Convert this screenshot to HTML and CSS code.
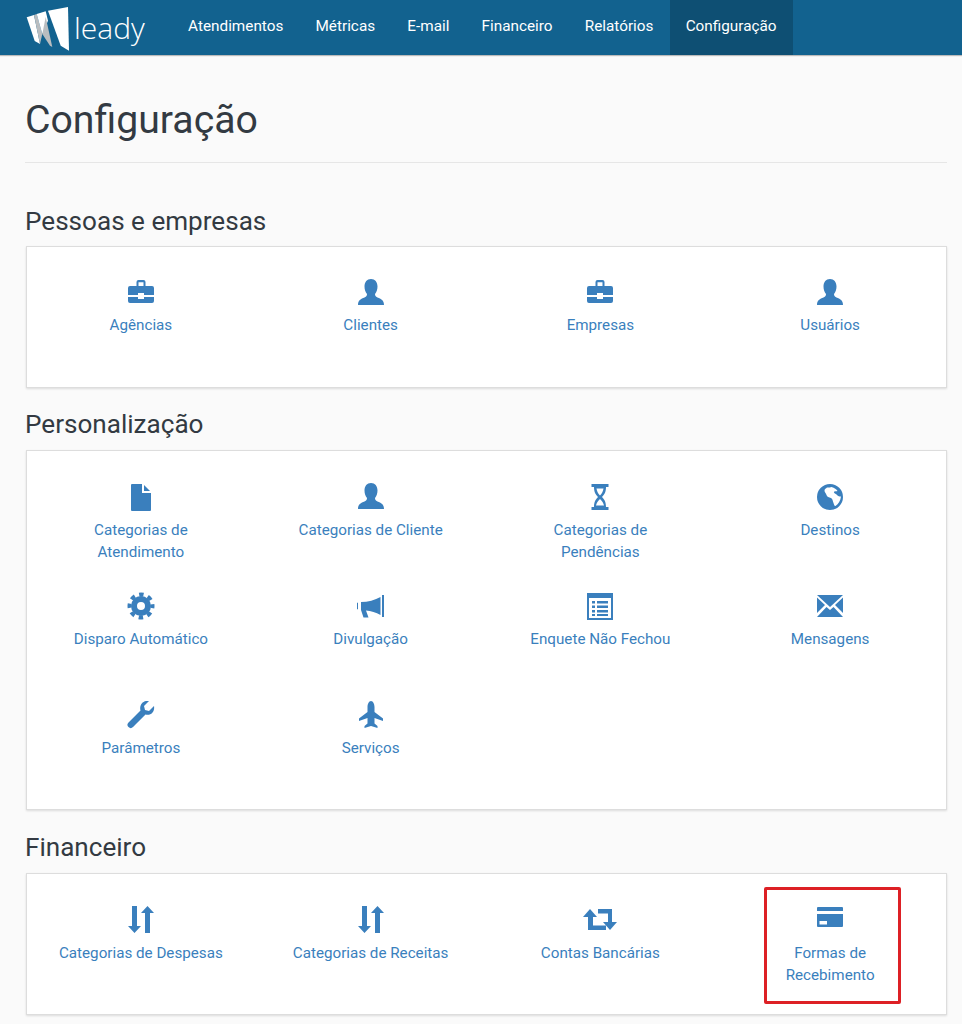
FILE: index.html
```html
<!DOCTYPE html>
<html lang="en">
<head>
    <meta charset="UTF-8">
    <title>Configuração</title>
    <link rel="stylesheet" href="styles.css">
</head>
<body>

    <svg class="sprite" xmlns="http://www.w3.org/2000/svg">
        <symbol id="i-briefcase" viewBox="0 1 28 28">
            <path d="M1 10a2 2 0 0 1 2-2h22a2 2 0 0 1 2 2v7H17v-2h-6v2H1z"/>
            <path d="M1 19h10v2h6v-2h10v4a2 2 0 0 1-2 2H3a2 2 0 0 1-2-2z"/>
            <path d="M9.500 8V4a2 2 0 0 1 2-2h5a2 2 0 0 1 2 2v4h-2V4.200h-5V8z"/>
        </symbol>
        <symbol id="i-user" viewBox="0 0 28 28">
            <path d="M14 0c4 0 6.500 3 6.500 7.500 0 3-1 5.500-2.500 7.500 0 1.500.5 2.500 2.500 3.500 3.500 1.500 6.500 2.500 6.500 7.500H1c0-5 3-6 6.500-7.500 2-1 2.500-2 2.500-3.500-1.500-2-2.500-4.500-2.500-7.500C7.500 3 10 0 14 0z"/>
        </symbol>
        <symbol id="i-file" viewBox="0 0 28 28">
            <path d="M5 1h10v9h9v17a1 1 0 0 1-1 1H5a1 1 0 0 1-1-1V2a1 1 0 0 1 1-1z"/>
            <path d="M17 2l6 6h-6z"/>
        </symbol>
        <symbol id="i-hourglass" viewBox="0 0 28 28">
            <path d="M5.500 1h17v3h-17zM5.500 24h17v3h-17z"/>
            <path d="M8 4h12c0 5-1.500 7.500-4 10 2.500 2.500 4 5 4 10H8c0-5 1.500-7.500 4-10-2.500-2.500-4-5-4-10zm2.500 1.500c.3 2.500 1.500 5 3.500 7 2-2 3.200-4.500 3.500-7zM10 22.500h8c-.5-2.500-2-4.500-4-6.500-2 2-3.500 4-4 6.500z" fill-rule="evenodd"/>
        </symbol>
        <symbol id="i-globe" viewBox="0 0 28 28">
            <path fill-rule="evenodd" d="M14 1a13 13 0 1 1 0 26 13 13 0 0 1 0-26zM11 4.500c-1 1-2.500 1.500-2.500 3 0 2 1.500 2.500 2 4.500.5 2 2.500 2 4.500 3 2 1 1.500 3 2.500 5 .5 1.500 1 3.500 2 3 3-2 5-5.500 5.500-9.500-1.500 0-3-.5-4-1.500-.8-1-2.500-1.500-3-2.500-.5-1.500 2-1 3.500-1.500-1-1.500-3-3.500-6-4-1 .5-2.500.5-4.500.5z"/>
        </symbol>
        <symbol id="i-gear" viewBox="0 0 28 28">
            <circle cx="14" cy="14" r="7" fill="none" stroke="currentColor" stroke-width="6"/>
            <circle cx="14" cy="14" r="11.500" fill="none" stroke="currentColor" stroke-width="4" stroke-dasharray="4.500 4.530" stroke-dashoffset="2.250"/>
        </symbol>
        <symbol id="i-bullhorn" viewBox="1 0 28 28">
            <path d="M26 3h2v22h-2zM24.500 5v18C20 20.500 15 19 10 18.500l2.500 7h-5L5 18V10c7 0 14-2 19.500-5zM0 11.500l2-1v7l-2-1z"/>
        </symbol>
        <symbol id="i-list" viewBox="0 0 28 28">
            <path fill-rule="evenodd" d="M1 1h26v27H1zm2 5v20h22V6z"/>
            <path d="M6 9h3v2.500H6zM11 9h11v2.500H11zM6 13.500h3V16H6zM11 13.500h11V16H11zM6 18h3v2.500H6zM11 18h11v2.500H11zM6 22h3v2H6zM11 22h11v2H11z"/>
        </symbol>
        <symbol id="i-envelope" viewBox="0 0 28 28">
            <path d="M1 3h26L14 15zM1 5.500V21l8-8zM27 5.500V21l-8-8zM1 25l9.500-10 3.500 3 3.500-3L27 25z"/>
        </symbol>
        <symbol id="i-wrench" viewBox="0 0 28 28">
            <path d="M27 5l-5 5-4-1-1-4 5-5c-6-1-10 4-8.500 9.500L1.500 21.500a2.800 2.800 0 0 0 4.500 4.500L18.500 13.500C24 15 28 10.500 27 5z"/>
        </symbol>
        <symbol id="i-plane" viewBox="0 0 28 28">
            <path d="M14 0c-2 0-3.500 3-3.500 6v5L2 17.500V20l8.500-3v5.500L7.500 25v2l6.500-2 6.500 2v-2l-3-2.500V17l8.500 3v-2.500L17.500 11V6c0-3-1.500-6-3.500-6z"/>
        </symbol>
        <symbol id="i-transfer" viewBox="0 0 28 28">
            <path d="M5 0h5v20h4l-6.500 7L1 20h4zM18 27h5V7h4L20.500 0 14 7h4z"/>
        </symbol>
        <symbol id="i-retweet" viewBox="0 0 34 28">
            <path d="M7 3l7 8h-4v8.500h13V24H5V11H0zM15 3h14v13h5l-7 8-7-8h5V7.500H15z"/>
        </symbol>
        <symbol id="i-card" viewBox="0 0 28 28">
            <path fill-rule="evenodd" d="M1 8h26v12a1 1 0 0 1-1 1H2a1 1 0 0 1-1-1zm2.500 7v3.500H11V15z"/>
            <path d="M2 1h24a1 1 0 0 1 1 1v3H1V2a1 1 0 0 1 1-1z"/>
        </symbol>
    </svg>

    <nav class="topbar">
        <a class="brand" href="#">
            <svg class="brand-mark" viewBox="0 0 44 44">
                <path fill="#fff" d="M.7 10.300L8 8l6 29-5.300-3z"/>
                <path fill="#b9bdc0" d="M8 8l2.700-1 5.600 20-2.300 10z"/>
                <path fill="#fff" d="M10.700 7l9-2.700 2.300 9.400-5.700 13.300z"/>
                <path fill="#b9bdc0" d="M19.700 10l6.600 30-2.300-1.300-7.700-11.700z"/>
                <path fill="#fff" d="M22 3.700L42 0l1 43.700-8.300-5z"/>
            </svg>
            <span class="brand-name">leady</span>
        </a>
        <ul class="nav-links">
            <li><a href="#">Atendimentos</a></li>
            <li><a href="#">Métricas</a></li>
            <li><a href="#">E-mail</a></li>
            <li><a href="#">Financeiro</a></li>
            <li><a href="#">Relatórios</a></li>
            <li class="active"><a href="#">Configuração</a></li>
        </ul>
    </nav>

    <main class="page">
        <h1>Configuração</h1>

        <h2>Pessoas e empresas</h2>
        <div class="panel">
            <a class="tile" href="#"><svg class="icon"><use href="#i-briefcase"/></svg><span>Agências</span></a>
            <a class="tile" href="#"><svg class="icon"><use href="#i-user"/></svg><span>Clientes</span></a>
            <a class="tile" href="#"><svg class="icon"><use href="#i-briefcase"/></svg><span>Empresas</span></a>
            <a class="tile" href="#"><svg class="icon"><use href="#i-user"/></svg><span>Usuários</span></a>
        </div>

        <h2>Personalização</h2>
        <div class="panel">
            <a class="tile" href="#"><svg class="icon"><use href="#i-file"/></svg><span>Categorias de<br>Atendimento</span></a>
            <a class="tile" href="#"><svg class="icon"><use href="#i-user"/></svg><span>Categorias de Cliente</span></a>
            <a class="tile" href="#"><svg class="icon"><use href="#i-hourglass"/></svg><span>Categorias de<br>Pendências</span></a>
            <a class="tile" href="#"><svg class="icon"><use href="#i-globe"/></svg><span>Destinos</span></a>
            <a class="tile" href="#"><svg class="icon"><use href="#i-gear"/></svg><span>Disparo Automático</span></a>
            <a class="tile" href="#"><svg class="icon"><use href="#i-bullhorn"/></svg><span>Divulgação</span></a>
            <a class="tile" href="#"><svg class="icon"><use href="#i-list"/></svg><span>Enquete Não Fechou</span></a>
            <a class="tile" href="#"><svg class="icon"><use href="#i-envelope"/></svg><span>Mensagens</span></a>
            <a class="tile" href="#"><svg class="icon"><use href="#i-wrench"/></svg><span>Parâmetros</span></a>
            <a class="tile" href="#"><svg class="icon"><use href="#i-plane"/></svg><span>Serviços</span></a>
        </div>

        <h2>Financeiro</h2>
        <div class="panel">
            <a class="tile" href="#"><svg class="icon"><use href="#i-transfer"/></svg><span>Categorias de Despesas</span></a>
            <a class="tile" href="#"><svg class="icon"><use href="#i-transfer"/></svg><span>Categorias de Receitas</span></a>
            <a class="tile" href="#"><svg class="icon icon-wide"><use href="#i-retweet"/></svg><span>Contas Bancárias</span></a>
            <a class="tile highlighted" href="#"><svg class="icon"><use href="#i-card"/></svg><span>Formas de<br>Recebimento</span></a>
        </div>
    </main>

</body>
</html>
```

FILE: styles.css
```css
body {
    font-family: Roboto, Arial, sans-serif;
    background-color: #fafafa;
    margin: 0;
    padding: 0;
    height: 1024px;
    overflow: hidden;
}

a {
    text-decoration: none;
}

.sprite {
    display: none;
}

.topbar {
    display: flex;
    height: 55px;
    padding-left: 26px;
    background-color: #12628f;
    box-shadow: 0 1px 1px rgba(0, 0, 0, 0.25);
}

.brand {
    display: flex;
    align-items: center;
    width: 146px;
    color: #fff;
}

.brand-mark {
    width: 44px;
    height: 44px;
    margin: 3px 4px 0 0;
}

.brand-name {
    font-family: "Open Sans", sans-serif;
    font-weight: 300;
    font-size: 30px;
}

.nav-links {
    display: flex;
    list-style: none;
    margin: 0;
    padding: 0;
}

.nav-links a {
    display: block;
    padding: 0 16.1px;
    line-height: 53px;
    font-size: 15.3px;
    color: #fff;
}

.nav-links .active {
    background-color: #0e4f73;
}

.page {
    padding: 0 15px 0 25px;
}

h1 {
    margin: 0;
    padding: 43px 0 20px;
    border-bottom: 1px solid #e6e6e6;
    font-size: 39.2px;
    line-height: 44px;
    font-weight: 400;
    color: #333a42;
}

h2 {
    margin: 0;
    padding: 43px 0 10px;
    font-size: 26.1px;
    line-height: 30px;
    font-weight: 400;
    color: #333a42;
}

.panel + h2 {
    padding: 21.4px 0 11px;
}

.panel {
    display: grid;
    grid-template-columns: repeat(4, 1fr);
    grid-auto-rows: 108px;
    row-gap: 1px;
    margin-left: 1px;
    padding-top: 32px;
    background-color: #fff;
    border: 1px solid #ddd;
    box-shadow: 0 1px 2px rgba(0, 0, 0, 0.12);
}

.tile {
    position: relative;
    display: flex;
    flex-direction: column;
    align-items: center;
    margin: 0 1px 0 -1px;
    text-align: center;
    font-size: 15.2px;
    line-height: 22px;
    color: #3a7fbd;
}

.icon {
    width: 28px;
    height: 28px;
    margin-bottom: 7px;
    fill: currentColor;
}

.panel + h2 + .panel .icon {
    margin-bottom: 8px;
}

.icon-wide {
    width: 34px;
}

/* annotation box drawn over the last tile */
.highlighted::after {
    content: "";
    position: absolute;
    top: -19px;
    left: 50%;
    width: 131px;
    height: 111px;
    margin-left: -66px;
    border: 3px solid #dd2025;
    border-radius: 2px;
}
```
